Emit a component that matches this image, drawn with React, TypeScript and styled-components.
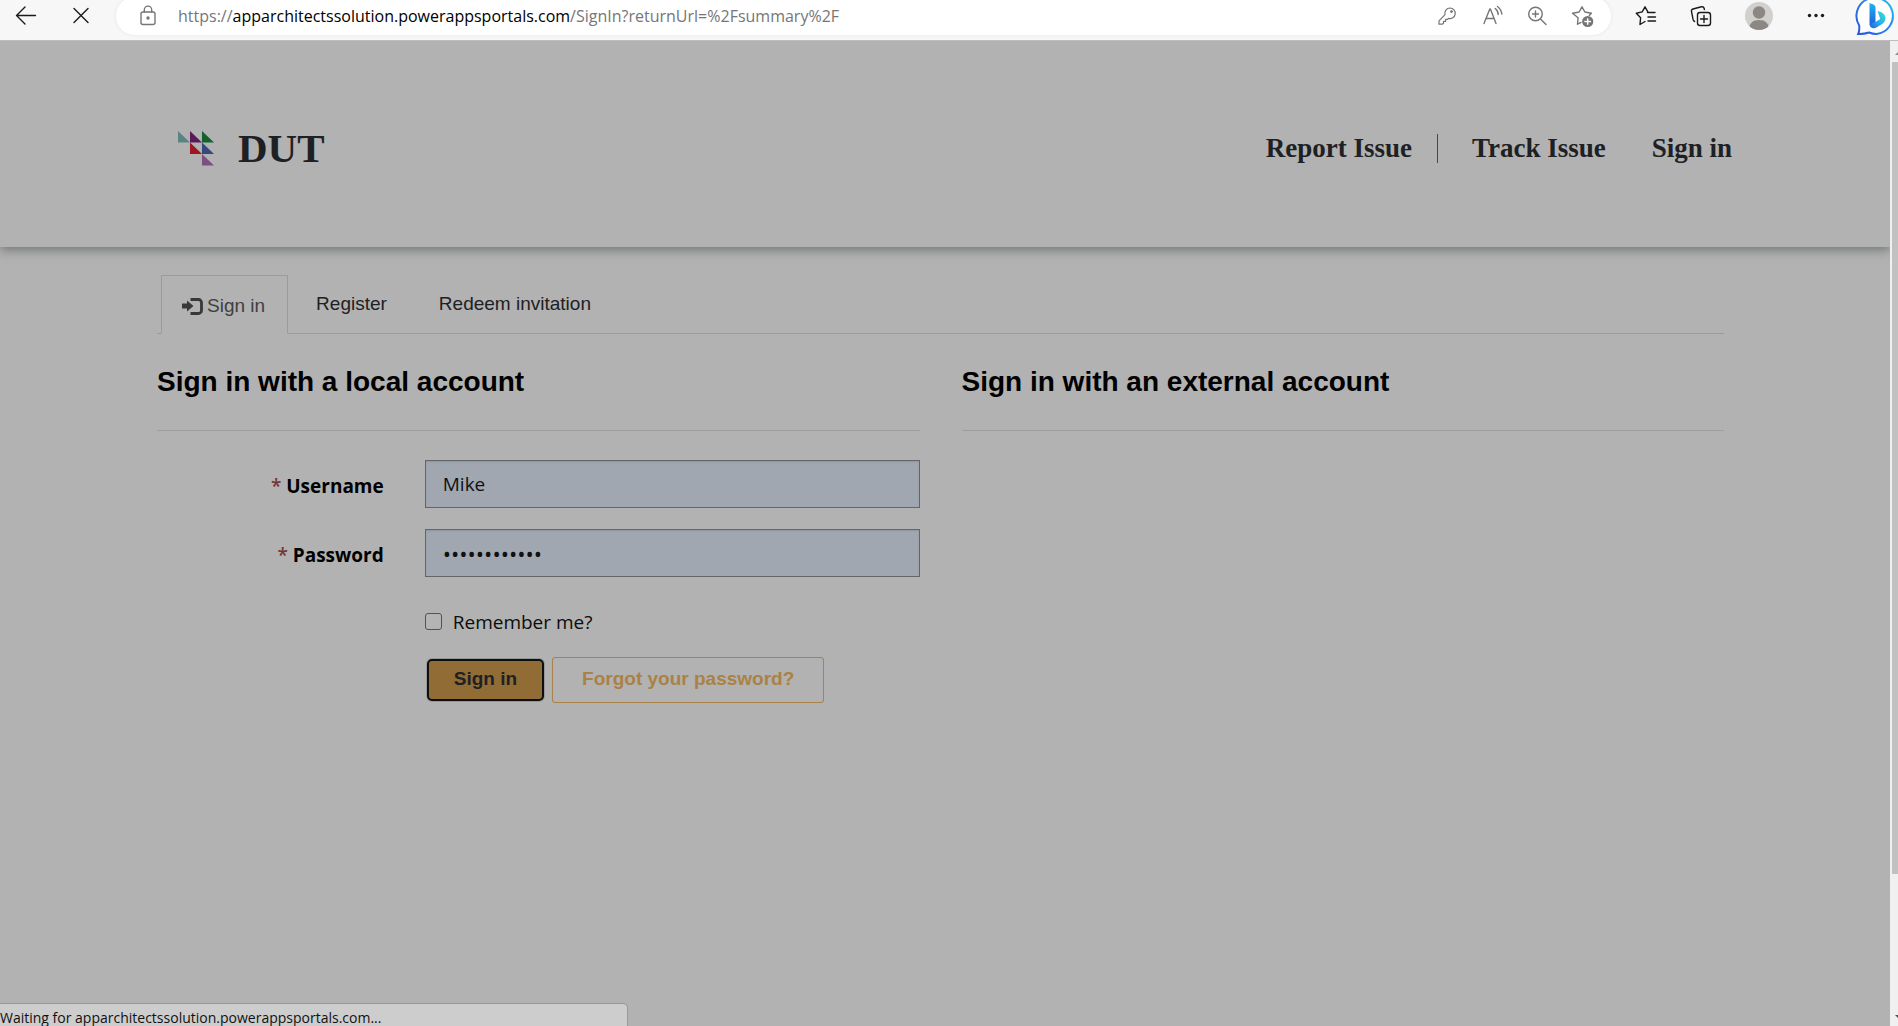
import React from "react";
import styled, { createGlobalStyle } from "styled-components";

const ui = `"Segoe UI", "Open Sans", sans-serif`;
const sans = `"Liberation Sans", Arial, sans-serif`;
const serif = `"Liberation Serif", "Times New Roman", serif`;

const GlobalStyle = createGlobalStyle`
  *, *::before, *::after { box-sizing: border-box; }
  body { margin: 0; background: #b2b2b2; color: #000; font-family: ${ui}; }
  h2, hr { margin: 0; }
`;

const Shell = styled.div`
  display: flex;
  flex-direction: column;
  min-height: 100vh;
`;

const Toolbar = styled.div`
  display: flex;
  align-items: flex-start;
  gap: 15px;
  height: 41px;
  padding: 0 2px 0 6px;
  overflow: hidden;
  background: #f7f7f7;
  border-bottom: 1px solid #bdbdbd;
`;

const ToolButton = styled.button<{ $width?: number; $start?: number }>`
  display: flex;
  align-items: center;
  justify-content: center;
  flex: none;
  width: ${(p) => p.$width ?? 40}px;
  height: 32px;
  margin: 0 0 0 ${(p) => p.$start ?? 0}px;
  padding: 0;
  border: 0;
  background: none;
  color: #1b1b1b;

  svg { flex: none; overflow: visible; }
`;

const AddressBar = styled.div`
  display: flex;
  align-items: center;
  flex: 1;
  min-width: 0;
  height: 38px;
  margin-top: -3px;
  padding: 0 17px 0 20px;
  border-radius: 19px;
  background: #fff;
  box-shadow: 0 0 4px rgba(0, 0, 0, 0.07);
`;

const Url = styled.div`
  flex: 1;
  min-width: 0;
  margin-left: 18px;
  overflow: hidden;
  white-space: nowrap;
  font-size: 16px;
  line-height: 24px;
  color: #767676;

  b { font-weight: 400; color: #000; }
`;

const AddressActions = styled.div`
  display: flex;
  gap: 21px;
`;

const AddressButton = styled(ToolButton)`
  width: 24px;
  color: #767676;
`;

const Viewport = styled.div`
  display: flex;
  flex: 1;
`;

const Page = styled.div`
  flex: 1;
  min-width: 0;
  overflow: hidden;
  background: #b2b2b2;
`;

const ScrollTrack = styled.div`
  display: flex;
  flex-direction: column;
  width: 8px;
  padding-left: 2px;
  overflow: hidden;
  background: #f0f0f0;
`;

const ScrollArrow = styled.svg`
  flex: none;
  width: 6px;
  height: 21px;
`;

const ScrollThumb = styled.div`
  flex: 812;
  background: #c1c1c1;
`;

const ScrollRest = styled.div`
  flex: 131;
`;

const Header = styled.header`
  display: flex;
  align-items: center;
  justify-content: space-between;
  height: 206px;
  padding: 8px 135px 0 178px;
  box-shadow: 0 3px 10px rgba(50, 55, 60, 0.5);
`;

const Brand = styled.a`
  display: flex;
  align-items: center;
  gap: 24px;
  color: #1e2123;
  font: bold 41px/48px ${serif};
  text-decoration: none;
`;

const Nav = styled.nav`
  display: flex;
  align-items: center;
`;

const NavLink = styled.a`
  padding: 0 23px;
  color: #1e2123;
  font: bold 27px/32px ${serif};
  text-decoration: none;
`;

const NavDivider = styled.span`
  width: 1px;
  height: 29px;
  margin: 0 11px 0 2px;
  background: #45484a;
`;

const Main = styled.main`
  padding: 28px 166px 0 157px;
`;

const Tabs = styled.div`
  display: flex;
  align-items: flex-end;
  padding-left: 4px;
  border-bottom: 1px solid #9b9b9b;
`;

const Tab = styled.a<{ $active?: boolean }>`
  display: flex;
  align-items: center;
  gap: 4px;
  height: ${(p) => (p.$active ? 59 : 58)}px;
  margin: 0 4px -1px 0;
  padding: ${(p) => (p.$active ? "3px 22px 0 20px" : "0 23px 3px")};
  border: 1px solid ${(p) => (p.$active ? "#9b9b9b" : "transparent")};
  border-bottom-color: ${(p) => (p.$active ? "#b2b2b2" : "transparent")};
  color: ${(p) => (p.$active ? "#404040" : "#1e2123")};
  font: 19px/28px ${sans};
  text-decoration: none;
`;

const Columns = styled.div`
  display: grid;
  grid-template-columns: 1fr 1fr;
  gap: 42px;
  padding-top: 30px;
`;

const SectionTitle = styled.h2`
  padding-bottom: 30px;
  border-bottom: 1px solid #9e9e9e;
  color: #000;
  font: bold 28px/36px ${sans};
`;

const Form = styled.form`
  display: grid;
  grid-template-columns: 11fr 24fr;
  column-gap: 41px;
  row-gap: 21px;
  padding-top: 29px;
`;

const FieldLabel = styled.label`
  align-self: center;
  padding-top: 3px;
  text-align: right;
  font-size: 19px;
  font-weight: 700;
  line-height: 28px;

  &::before {
    content: "* ";
    color: #743634;
    font-weight: 600;
  }
`;

const TextField = styled.input`
  width: 100%;
  height: 48px;
  padding: 0 17px;
  border: 1px solid #646566;
  border-radius: 0;
  outline: 0;
  background: #a0a7b1;
  box-shadow: inset 0 1px 2px rgba(0, 0, 0, 0.1);
  color: #101010;
  font: 19px/28px ${ui};

  &[type="password"] { font-size: 22px; }
`;

const FormBody = styled.div`
  grid-column: 2;
`;

const Remember = styled.label`
  display: flex;
  align-items: center;
  gap: 11px;
  height: 28px;
  margin: 10px 0 21px;
  font-size: 19px;
  line-height: 28px;
  color: #0c0c0c;
`;

const Checkbox = styled.input`
  appearance: none;
  width: 17px;
  height: 17px;
  margin: 0 0 2px;
  border: 1px solid #525252;
  border-radius: 3px;
  background: #b4b4b4;
`;

const Actions = styled.div`
  display: flex;
  align-items: center;
  gap: 6px;
`;

const SubmitButton = styled.button`
  height: 42px;
  margin: 0 2px;
  padding: 0 25px 2px;
  border: 2px solid #0e0e0e;
  border-radius: 5px;
  background: #916d35;
  box-shadow: 0 0 0 1px #989898;
  color: #1e2123;
  font: bold 19px/28px ${sans};
`;

const OutlineButton = styled.button`
  height: 46px;
  padding: 0 29px 2px;
  border: 1px solid #aa8146;
  border-radius: 3px;
  background: transparent;
  color: #aa8146;
  font: bold 19px/28px ${sans};
`;

const StatusBubble = styled.div`
  position: fixed;
  left: 0;
  bottom: 0;
  width: 628px;
  max-width: 100%;
  height: 23px;
  overflow: hidden;
  border-top: 1px solid #989898;
  border-right: 1px solid #989898;
  border-radius: 0 5px 0 0;
  background: #cdcdcd;
  color: #111;
  font-size: 14px;
  line-height: 28px;
  white-space: nowrap;
`;

const Line = ({
  size = 24,
  width = 1.4,
  children,
}: {
  size?: number;
  width?: number;
  children: React.ReactNode;
}) => (
  <svg
    width={size}
    height={size}
    viewBox="0 0 24 24"
    fill="none"
    stroke="currentColor"
    strokeWidth={width}
    strokeLinecap="round"
    strokeLinejoin="round"
    aria-hidden="true"
  >
    {children}
  </svg>
);

const BackIcon = () => (
  <Line>
    <path d="M21.5 11.5H2.5M11 3L2.5 11.5L11 20" />
  </Line>
);

const StopIcon = () => (
  <Line>
    <path d="M5 4.5L19 18.5M19 4.5L5 18.5" />
  </Line>
);

const LockIcon = () => (
  <Line>
    <rect x="5" y="8" width="14" height="12.5" rx="2" />
    <path d="M8.3 8V5.8a3.7 3.7 0 0 1 7.4 0V8" />
    <circle cx="12" cy="14" r="1" fill="currentColor" />
  </Line>
);

const KeyIcon = () => (
  <Line width={1.2}>
    <path d="M15 4a5.3 5.3 0 1 1-1.5 10.4l-1 1H10.600v2H8.500v1.800l-1.200 1H4v-3.300l6-6.200A5.300 5.300 0 0 1 15 4Z" />
    <circle cx="16.500" cy="7.600" r="0.800" fill="currentColor" />
  </Line>
);

const ReadAloudIcon = () => (
  <Line>
    <path d="M4 19.500L9.800 5h.6L16 19.500M6 14.500h8M15.200 4.500a7.500 7.500 0 0 1 3 6M17.500 2.500a11 11 0 0 1 4.300 7.500" />
  </Line>
);

const ZoomIcon = () => (
  <Line>
    <circle cx="10.500" cy="10" r="6.800" />
    <path d="M15.500 15l5.500 5.500M10.500 7v6M7.500 10h6" />
  </Line>
);

const AddFavoriteIcon = () => (
  <Line>
    <path d="M7.500 20.200l.6-6.500L2.500 9.200l6.600-1.200L12 2.800l2.900 5.200 6.500 1.200-2.200 2.300M7.500 20.200l3.500-1.800" />
    <circle cx="17.700" cy="17.500" r="5.600" fill="currentColor" stroke="none" />
    <path d="M17.700 14.700v5.600M14.900 17.500h5.600" stroke="#fff" />
  </Line>
);

const FavoritesIcon = () => (
  <Line>
    <path d="M6 20.500l.6-6.700L2.300 9.300l5.900-1.400L11 2.800l2.800 5.100M6 20.500l5-3M13.500 8.500H21M14 13h7.500M14 17h7.500" />
  </Line>
);

const CollectionsIcon = () => (
  <Line>
    <rect x="8.500" y="8.500" width="13" height="13" rx="2.500" />
    <path d="M15 11.500v7M11.500 15h7M5.600 17.500c-.8-.3-1.300-1-1.500-1.800L2.500 7.500c-.2-1.100.4-2.200 1.500-2.500l8.500-2.200c1.200-.3 2.300.4 2.600 1.500l.3 1.200" />
  </Line>
);

const AvatarIcon = () => (
  <svg width="28" height="28" viewBox="0 0 28 28" aria-hidden="true">
    <defs>
      <clipPath id="avatar">
        <circle cx="14" cy="14" r="14" />
      </clipPath>
    </defs>
    <g clipPath="url(#avatar)">
      <rect width="28" height="28" fill="#d2d0cc" />
      <circle cx="14" cy="10.500" r="6.200" fill="#8b8784" />
      <path d="M4 28c0-7 4-10 10-10s10 3 10 10Z" fill="#8b8784" />
    </g>
  </svg>
);

const MoreIcon = () => (
  <svg width="20" height="20" viewBox="0 0 20 20" fill="#1b1b1b" aria-hidden="true">
    <circle cx="2.500" cy="9.500" r="1.700" />
    <circle cx="9" cy="9.500" r="1.700" />
    <circle cx="15.500" cy="9.500" r="1.700" />
  </svg>
);

const BingIcon = () => (
  <svg width="39" height="38" viewBox="0 0 39 38" aria-hidden="true">
    <defs>
      <linearGradient id="bubble" x1="0" y1="1" x2="1" y2="0">
        <stop offset="0" stopColor="#2456d8" />
        <stop offset="0.500" stopColor="#2b7cf0" />
        <stop offset="1" stopColor="#21c8ee" />
      </linearGradient>
      <linearGradient id="stem" x1="0" y1="0" x2="0" y2="1">
        <stop offset="0" stopColor="#1fb4f2" />
        <stop offset="1" stopColor="#1e55d6" />
      </linearGradient>
      <linearGradient id="bowl" x1="1" y1="0" x2="0" y2="1">
        <stop offset="0" stopColor="#3be3c8" />
        <stop offset="0.500" stopColor="#25b2f2" />
        <stop offset="1" stopColor="#1f62e0" />
      </linearGradient>
    </defs>
    <path
      d="M1.200 37c1.500-3 1.300-5 1-8.500A18.200 18.200 0 1 1 19.500 37c-3 0-5-.5-7.500-1.500-3 1-6 1.700-10.800 1.500Z"
      fill="#fff"
      stroke="url(#bubble)"
      strokeWidth="2"
    />
    <path d="M12.500 6l4 1.500q2 .8 2 3V26l-2 5q-4-.5-4-5Z" fill="url(#stem)" />
    <path d="M20.500 14q4 .5 6 2.700 3 3 1.500 7-.6 1.700-2.500 3L18.500 31q-5.500 1-6-4l6-2 4.800-3Z" fill="url(#bowl)" />
  </svg>
);

const logoTriangles: [number, number, string][] = [
  [0, 0, "#5a8482"],
  [1, 0, "#5b1a57"],
  [2, 0, "#15602f"],
  [1, 1, "#9d1620"],
  [2, 1, "#324a7c"],
  [2, 2, "#7b5181"],
];

const Logo = () => (
  <svg width="36" height="35" viewBox="0 0 36 35" aria-hidden="true">
    {logoTriangles.map(([col, row, fill]) => (
      <path key={`${col}${row}`} d={`M${col * 12} ${row * 11.5}v11.500h12Z`} fill={fill} />
    ))}
  </svg>
);

const LogInIcon = () => (
  <svg width="21" height="17" viewBox="0 0 21 17" aria-hidden="true">
    <path d="M0 5.500h5V2.500l6.500 5.500L5 13.500v-3H0Z" fill="#383838" />
    <path d="M8.500 1.500H16.500a3 3 0 0 1 3 3v8a3 3 0 0 1-3 3H8.500" fill="none" stroke="#383838" strokeWidth="2.800" />
  </svg>
);

export default function App() {
  return (
    <Shell>
      <GlobalStyle />
      <Toolbar>
        <ToolButton aria-label="Back"><BackIcon /></ToolButton>
        <ToolButton aria-label="Stop loading"><StopIcon /></ToolButton>
        <AddressBar>
          <AddressButton aria-label="Site information"><LockIcon /></AddressButton>
          <Url>
            https://<b>apparchitectssolution.powerappsportals.com</b>/SignIn?returnUrl=%2Fsummary%2F
          </Url>
          <AddressActions>
            <AddressButton aria-label="Saved passwords"><KeyIcon /></AddressButton>
            <AddressButton aria-label="Read aloud"><ReadAloudIcon /></AddressButton>
            <AddressButton aria-label="Zoom"><ZoomIcon /></AddressButton>
            <AddressButton aria-label="Add to favorites"><AddFavoriteIcon /></AddressButton>
          </AddressActions>
        </AddressBar>
        <ToolButton aria-label="Favorites"><FavoritesIcon /></ToolButton>
        <ToolButton aria-label="Collections"><CollectionsIcon /></ToolButton>
        <ToolButton $width={46} aria-label="Profile"><AvatarIcon /></ToolButton>
        <ToolButton aria-label="More"><MoreIcon /></ToolButton>
        <ToolButton $width={39} $start={5} aria-label="Bing"><BingIcon /></ToolButton>
      </Toolbar>

      <Viewport>
        <Page>
          <Header>
            <Brand href="#"><Logo />DUT</Brand>
            <Nav>
              <NavLink href="#report">Report Issue</NavLink>
              <NavDivider />
              <NavLink href="#track">Track Issue</NavLink>
              <NavLink href="#signin">Sign in</NavLink>
            </Nav>
          </Header>

          <Main>
            <Tabs>
              <Tab href="#signin" $active><LogInIcon />Sign in</Tab>
              <Tab href="#register">Register</Tab>
              <Tab href="#redeem">Redeem invitation</Tab>
            </Tabs>

            <Columns>
              <section>
                <SectionTitle>Sign in with a local account</SectionTitle>
                <Form onSubmit={(e) => e.preventDefault()}>
                  <FieldLabel htmlFor="username">Username</FieldLabel>
                  <TextField id="username" type="text" defaultValue="Mike" />
                  <FieldLabel htmlFor="password">Password</FieldLabel>
                  <TextField id="password" type="password" defaultValue="abcdefghijkl" />
                  <FormBody>
                    <Remember>
                      <Checkbox type="checkbox" />
                      Remember me?
                    </Remember>
                    <Actions>
                      <SubmitButton type="submit">Sign in</SubmitButton>
                      <OutlineButton type="button">Forgot your password?</OutlineButton>
                    </Actions>
                  </FormBody>
                </Form>
              </section>
              <section>
                <SectionTitle>Sign in with an external account</SectionTitle>
              </section>
            </Columns>
          </Main>
        </Page>

        <ScrollTrack>
          <ScrollArrow viewBox="0 0 6 21"><path d="M3 14l5-5v5Z" fill="#8a8a8a" /></ScrollArrow>
          <ScrollThumb />
          <ScrollRest />
          <ScrollArrow viewBox="0 0 6 21"><path d="M3 10h5v5Z" fill="#505050" /></ScrollArrow>
        </ScrollTrack>
      </Viewport>

      <StatusBubble>Waiting for apparchitectssolution.powerappsportals.com...</StatusBubble>
    </Shell>
  );
}
